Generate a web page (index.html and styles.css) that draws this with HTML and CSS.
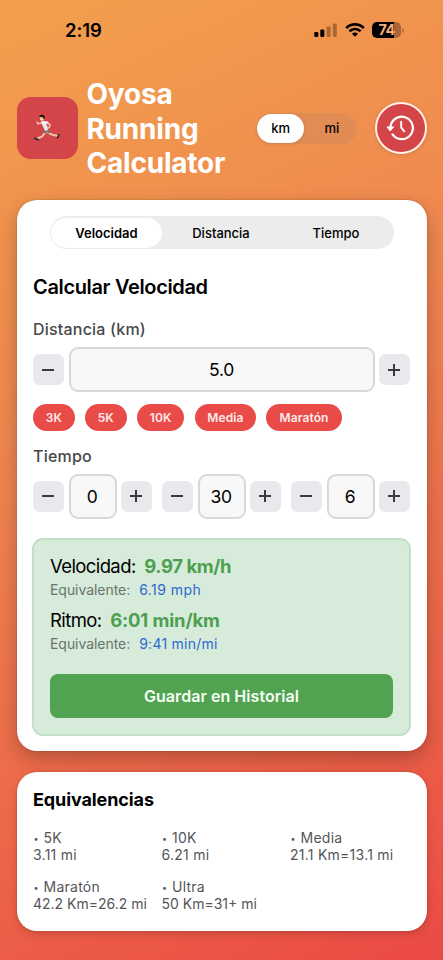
FILE: index.html
```html
<!DOCTYPE html>
<html lang="es">
<head>
<meta charset="utf-8">
<title>Oyosa Running Calculator</title>
<link rel="stylesheet" href="styles.css">
</head>
<body>
<div class="screen">
  <div class="status">
    <span class="clock">2:19</span>
    <div class="indicators">
      <svg class="signal" width="24" height="16" viewBox="0 0 24 16">
        <rect x="0.3" y="10" width="4" height="5" rx="1.2"/>
        <rect x="6.3" y="7.6" width="4" height="7.4" rx="1.2"/>
        <g opacity=".3"><rect x="12.6" y="4.6" width="4" height="10.4" rx="1.2"/><rect x="18.8" y="1.4" width="4" height="13.6" rx="1.2"/></g>
      </svg>
      <svg class="wifi" width="20" height="16" viewBox="0 0 20 16">
        <g fill="none" stroke="#000" stroke-width="2.7"><path d="M1.2 6.1C6.2 1.2 13.8 1.2 18.8 6.1"/><path d="M4.4 9.3C7.6 6.2 12.4 6.2 15.6 9.3"/></g>
        <path d="M10 14.8 6.9 11.7C8.6 10.1 11.4 10.1 13.1 11.7Z"/>
      </svg>
      <div class="battery"><span>74</span></div><i class="battery-tip"></i>
    </div>
  </div>

  <header class="header">
    <div class="logo">
      <svg width="28" height="30" viewBox="0 0 28 30">
        <g fill="none" stroke-linecap="round" stroke-linejoin="round">
          <path d="M8.5 10 4.8 10.8 4.2 9" stroke="#f1c6a8" stroke-width="1.5"/>
          <path d="M12.5 18.8 9.4 23.3 4.8 25.4" stroke="#f3c9aa" stroke-width="1.9"/>
          <path d="M14 18.8 19 21.6 24.6 23" stroke="#f3c9aa" stroke-width="1.9"/>
          <path d="M12.6 17.4 11.8 18.8M13.6 17.2 16 19" stroke="#77706e" stroke-width="2.8"/>
          <path d="M10.6 10.2 13.2 15.6" stroke="#eceaf0" stroke-width="4"/>
          <path d="M13.8 9 17.2 11.8 16.2 14.4 14.4 15.4" stroke="#f3c9aa" stroke-width="1.5"/>
          <path d="M9.5 9.3 14.2 9.6" stroke="#f6f4f8" stroke-width="2.4"/>
          <path d="M1.8 25.4 5.4 26.8M24.4 24.6 26 21.9" stroke="#27233b" stroke-width="1.7"/>
        </g>
        <path d="M6.7 3.8h4.2v3.2L8.8 8 7 6.8Z" fill="#f3c9aa"/>
        <path d="M6.2 4C5.8 2.2 7.6 2.4 8.8 1.8 11 1.5 12.2 3.2 11.5 5.8L10.5 6 9.8 4.3Z" fill="#201713"/>
      </svg>
    </div>
    <h1>Oyosa<br>Running<br>Calculator</h1>
    <div class="units"><span class="unit on">km</span><span class="unit">mi</span></div>
    <div class="history">
      <svg width="30" height="30" viewBox="0 0 30 30" fill="none" stroke="#fff" stroke-width="2.2" stroke-linecap="round" stroke-linejoin="round">
        <path d="M4.5 14.2A11.2 11.2 0 1 1 6.5 21.4"/>
        <path d="M15.2 8.8V14.6L18.3 18.3" stroke-width="1.9"/>
        <path d="M1.3 13.9H7.6L4.4 17.7Z" fill="#fff" stroke-width="1"/>
      </svg>
    </div>
  </header>

  <main class="card main-card">
    <div class="tabs"><span class="tab on">Velocidad</span><span class="tab">Distancia</span><span class="tab">Tiempo</span></div>
    <h2>Calcular Velocidad</h2>
    <div class="label">Distancia (km)</div>
    <div class="stepper wide">
      <b class="step minus"></b><div class="field">5.0</div><b class="step plus"></b>
    </div>
    <div class="chips">
      <span class="chip c1">3K</span><span class="chip c1">5K</span><span class="chip c2">10K</span><span class="chip c3">Media</span><span class="chip c4">Maratón</span>
    </div>
    <div class="label time-label">Tiempo</div>
    <div class="time">
      <div class="stepper"><b class="step minus"></b><div class="field">0</div><b class="step plus"></b></div>
      <div class="stepper"><b class="step minus"></b><div class="field">30</div><b class="step plus"></b></div>
      <div class="stepper"><b class="step minus"></b><div class="field">6</div><b class="step plus"></b></div>
    </div>
    <section class="result">
      <div class="line"><span class="name">Velocidad:</span><strong>9.97 km/h</strong></div>
      <div class="sub"><span>Equivalente:</span><em>6.19 mph</em></div>
      <div class="line"><span class="name">Ritmo:</span><strong class="pace">6:01 min/km</strong></div>
      <div class="sub"><span>Equivalente:</span><em class="pace-alt">9:41 min/mi</em></div>
      <div class="save">Guardar en Historial</div>
    </section>
  </main>

  <section class="card eq-card">
    <h3>Equivalencias</h3>
    <div class="grid">
      <div><i class="dot">•</i>5K<br>3.11 mi</div>
      <div><i class="dot">•</i>10K<br>6.21 mi</div>
      <div><i class="dot">•</i>Media<br>21.1 Km=13.1 mi</div>
      <div><i class="dot">•</i>Maratón<br><span class="tight">42.2 Km=26.2 mi</span></div>
      <div><i class="dot">•</i>Ultra<br><span class="tight">50 Km=31+ mi</span></div>
    </div>
  </section>
</div>
</body>
</html>
```
FILE: styles.css
```css
* { box-sizing: border-box; margin: 0; padding: 0; }
body { font-family: Inter, "Liberation Sans", sans-serif; color: #000; white-space: nowrap; }
.screen {
  width: 443px; height: 960px; overflow: hidden; padding: 0 16.5px;
  background: linear-gradient(155.2deg, #f2a04c 0%, #ef8450 42%, #ed6448 75%, #ea4a45 100%);
}
.status { height: 60px; display: flex; justify-content: space-between; padding: 0 22.5px 0 48.5px; }
.clock { font-size: 18.5px; font-weight: 600; line-height: 61px; letter-spacing: -.1px; }
.indicators { display: flex; align-items: center; height: 60px; }
.wifi { margin: 0 7px; }
.battery {
  width: 29px; height: 16px; border-radius: 5px; color: #f8ae76; font-size: 14.5px; font-weight: 700;
  line-height: 16px; text-align: center; letter-spacing: -.8px;
  background: linear-gradient(90deg, #000 22px, #a96438 22px);
}
.battery-tip { width: 2px; height: 5px; margin-left: 1px; border-radius: 0 2px 2px 0; background: #b86e3e; }

.header { height: 136px; display: flex; align-items: center; }
.logo { width: 61.5px; height: 62px; border-radius: 14px; background: #d44549; display: flex; align-items: center; justify-content: center; }
h1 { width: 162px; margin-left: 8.5px; padding-top: 2px; color: #fff; font-size: 28px; line-height: 34.4px; font-weight: 700; letter-spacing: -.2px; }
.units { width: 101px; height: 31px; margin-left: 8px; border-radius: 16px; background: rgba(118, 118, 128, .12); display: flex; align-items: center; }
.unit { flex: 1; height: 29px; padding-left: 3px; text-align: center; line-height: 29px; font-size: 13px; font-weight: 500; border-radius: 15px; }
.unit.on { flex: 0 0 47px; margin-left: .5px; padding-left: 1px; background: #fff; box-shadow: 0 1px 4px rgba(0, 0, 0, .1); }
.history { width: 52px; height: 52px; margin-left: 17.5px; border-radius: 50%; border: 2px solid #fff3e8; background: #d44549; display: flex; align-items: center; justify-content: center; box-shadow: 0 1px 4px rgba(0, 0, 0, .12); }

.card { width: 410px; background: #fff; border-radius: 20px; padding: 0 16.5px; }
.main-card { height: 551px; margin-top: 4px; padding-top: 16px; box-shadow: 0 8px 20px rgba(0, 0, 0, .24), 0 0 2px rgba(0, 0, 0, .25); }
.tabs { width: 344px; height: 33px; margin: 0 auto; border-radius: 17px; background: #ececed; display: flex; align-items: center; padding: 0 1.5px; }
.tab { flex: 1; height: 30px; padding-left: 3px; line-height: 30px; text-align: center; font-size: 13px; font-weight: 500; border-radius: 15px; }
.tab.on { flex: 0 0 111px; padding: 0; font-weight: 600; background: #fff; }
h2 { margin-top: 26px; font-size: 20px; line-height: 24px; font-weight: 600; letter-spacing: -.35px; }
.label { margin-top: 20px; font-size: 16px; line-height: 20px; font-weight: 500; letter-spacing: .2px; color: #47474a; }
.stepper { display: flex; align-items: center; gap: 4.5px; }
.wide { width: 377px; margin-top: 8px; }
.step {
  --g: #3a3a3e;
  width: 31px; height: 31px; flex: none; border-radius: 6.5px; background: #e8e9ed;
  background-repeat: no-repeat; background-position: 9px center;
  background-image: linear-gradient(var(--g), var(--g)); background-size: 12px 2px;
}
.plus { background-image: linear-gradient(var(--g), var(--g)), linear-gradient(var(--g), var(--g)); background-size: 12px 2px, 2px 12px; background-position: 9px center, 14px center; }
.field { flex: 1; height: 45px; border: 2px solid #d8d8da; border-radius: 9px; background: #f8f8f8; text-align: center; line-height: 41px; font-size: 17.5px; letter-spacing: -.3px; }
.time .field { padding-right: 1px; }
.chips { display: flex; gap: 10.2px; margin-top: 12px; }
.chip { height: 27px; line-height: 27px; border-radius: 14px; background: #e94b49; color: #fdebea; font-size: 12px; font-weight: 600; text-align: center; letter-spacing: .1px; }
.c1 { width: 41.7px; }
.c2 { width: 47.7px; }
.c3 { width: 61.5px; }
.c4 { width: 75.5px; }
.time-label { margin-top: 15.4px; }
.time { display: flex; justify-content: space-between; width: 377px; margin-top: 7.6px; }
.time .stepper { width: 119px; }
.result { width: 379px; height: 198px; margin: 19px 0 0 -1px; padding: 14px 16px; border: 2px solid #c3dfc7; border-radius: 11px; background: #d7ebdb; }
.line { display: flex; gap: 8.7px; font-size: 18.5px; line-height: 24px; letter-spacing: -.3px; }
.line .name { letter-spacing: -.6px; }
.line strong { color: #4da04f; font-weight: 700; letter-spacing: -.4px; }
.line .pace { letter-spacing: -.15px; }
.sub { display: flex; gap: 9px; height: 20px; margin-bottom: 10.5px; font-size: 14px; line-height: 24px; letter-spacing: -.05px; color: #69736d; }
.sub em { font-style: normal; letter-spacing: .45px; color: #2c68d0; }
.sub .pace-alt { letter-spacing: .25px; }
.save { height: 44.5px; margin-top: 21.5px; border-radius: 8px; background: #51a351; color: #f5fff5; text-align: center; line-height: 44px; font-size: 16px; font-weight: 600; letter-spacing: .05px; }
.sub:nth-child(4) { margin-bottom: 0; }
.sub:nth-child(4) + .save { margin-top: 21.5px; }
.eq-card { height: 159px; margin-top: 21px; padding-top: 17px; box-shadow: 0 3px 8px rgba(0, 0, 0, .16), 0 0 2px rgba(0, 0, 0, .2); }
h3 { font-size: 18px; line-height: 22px; font-weight: 700; letter-spacing: -.1px; }
.grid { display: grid; grid-template-columns: 128.5px 128.5px 1fr; row-gap: 14px; margin-top: 17.5px; font-size: 14px; line-height: 17.5px; letter-spacing: .25px; color: #555558; }
.tight { letter-spacing: 0; }
.dot { display: inline-block; width: 10.5px; padding-left: .5px; font-style: normal; font-size: 9px; line-height: 10px; vertical-align: 1px; letter-spacing: 0; }
```
